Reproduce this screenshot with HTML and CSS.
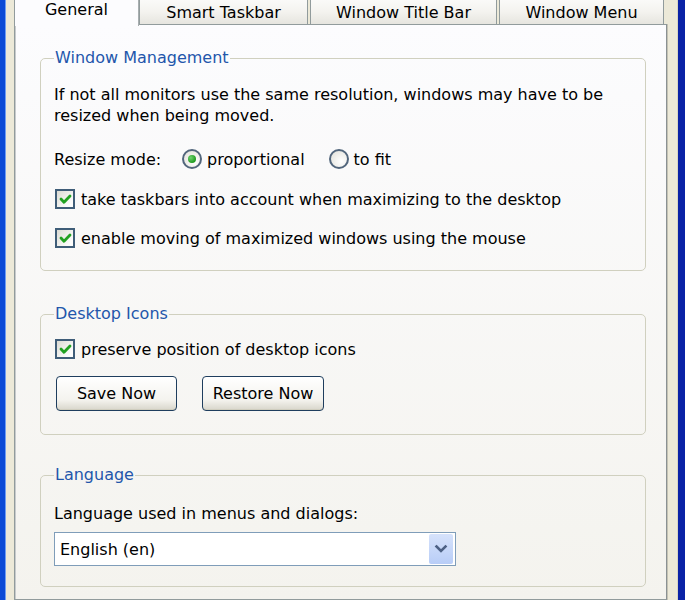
FILE: index.html
```html
<!DOCTYPE html>
<html>
<head>
<meta charset="utf-8">
<link rel="stylesheet" href="styles.css">
</head>
<body>
<div class="window">
  <div class="tabs">
    <div class="tab selected t-general">General</div>
    <div class="tab t-smart">Smart Taskbar</div>
    <div class="tab t-title">Window Title Bar</div>
    <div class="tab t-menu">Window Menu</div>
  </div>
  <div class="panel">
    <fieldset class="group g-wm">
      <legend>Window Management</legend>
      <p class="desc">If not all monitors use the same resolution, windows may have to be<br>resized when being moved.</p>
      <div class="resize">
        <span class="resize-label">Resize mode:</span>
        <label class="radio"><span class="rb checked"><span class="dot"></span></span>proportional</label>
        <label class="radio"><span class="rb"></span>to fit</label>
      </div>
      <label class="check c1"><span class="cb"><svg viewBox="0 0 15 15" width="15" height="15"><path d="M3 7 L6 10.2 L12 4" fill="none" stroke="#21a121" stroke-width="2.8" stroke-linecap="round" stroke-linejoin="round"/></svg></span>take taskbars into account when maximizing to the desktop</label>
      <label class="check c2"><span class="cb"><svg viewBox="0 0 15 15" width="15" height="15"><path d="M3 7 L6 10.2 L12 4" fill="none" stroke="#21a121" stroke-width="2.8" stroke-linecap="round" stroke-linejoin="round"/></svg></span>enable moving of maximized windows using the mouse</label>
    </fieldset>

    <fieldset class="group g-di">
      <legend>Desktop Icons</legend>
      <label class="check c3"><span class="cb"><svg viewBox="0 0 15 15" width="15" height="15"><path d="M3 7 L6 10.2 L12 4" fill="none" stroke="#21a121" stroke-width="2.8" stroke-linecap="round" stroke-linejoin="round"/></svg></span>preserve position of desktop icons</label>
      <div class="buttons">
        <button class="btn b-save">Save Now</button>
        <button class="btn b-restore">Restore Now</button>
      </div>
    </fieldset>

    <fieldset class="group g-lang">
      <legend>Language</legend>
      <p class="lang-label">Language used in menus and dialogs:</p>
      <div class="combo">
        <span class="combo-text">English (en)</span>
        <span class="combo-btn"><svg viewBox="0 0 24 30" width="24" height="30"><path d="M7.5 12.5 L12 17 L16.5 12.5" fill="none" stroke="#4d6185" stroke-width="2.6" stroke-linecap="square"/></svg></span>
      </div>
    </fieldset>
  </div>
</div>
</body>
</html>
```

FILE: styles.css
```css
html, body {
  margin: 0;
  padding: 0;
  overflow: hidden;
}

body {
  font-family: "DejaVu Sans", sans-serif;
  font-size: 16px;
  color: #000;
  background: #ece9d8;
}

.window {
  height: 600px;
  box-sizing: border-box;
  background: #ece9d8;
  border-left: 5px solid #0b4ad6;
  border-right: 7px solid #0a22a6;
  padding: 0 11px 0 9px;
  display: flex;
  flex-direction: column;
  box-shadow: inset 1px 0 0 #6f9ef2, inset -1px 0 0 #d8d5c4;
}

.tabs {
  height: 24px;
  display: flex;
  align-items: flex-end;
  flex: none;
}

.tab {
  box-sizing: border-box;
  height: 32px;
  border: 1px solid #919b9c;
  border-bottom: 0;
  border-radius: 3px 3px 0 0;
  background: linear-gradient(to bottom, #fefefe, #f4f3ef 60%, #e6e5df);
  display: flex;
  align-items: center;
  justify-content: center;
  padding-top: 8px;
  white-space: nowrap;
}

.tab.selected {
  position: relative;
  z-index: 2;
  height: 35px;
  margin-bottom: -2px;
  padding-top: 1px;
  background: #fcfcfe;
  border-right-color: #a8aeb0;
}

.t-general { width: 125px; }
.t-smart { width: 169px; }
.t-title { width: 187px; margin-left: 2px; }
.t-menu { width: 165px; margin-left: 2px; }

.panel {
  flex: 1;
  border: 1px solid #919b9c;
  border-right-color: #8a9193;
  box-shadow: inset 1px 0 0 #c8cbcc, 1px 0 0 #c4c2b4;
  background: linear-gradient(to bottom, #fcfcfe, #f4f3ee);
  padding: 0 20px 0 25px;
}

.group {
  margin: 0;
  border: 1px solid #d0d0bf;
  border-radius: 5px;
  padding: 0 10px 0 13px;
  min-width: 0;
}

.group legend {
  color: #2356ab;
  line-height: 20px;
  padding: 0 1px;
}

.g-wm {
  margin-top: 23px;
  padding-top: 16px;
  padding-bottom: 20px;
}

.g-di {
  margin-top: 33px;
  padding-top: 13px;
  padding-bottom: 23px;
}

.g-lang {
  margin-top: 30px;
  padding-top: 18px;
  padding-bottom: 20px;
}

.desc {
  margin: 0;
  line-height: 21px;
}

.resize {
  margin-top: 21px;
  height: 24px;
  display: flex;
  align-items: center;
}

.resize-label {
  width: 128px;
}

.radio {
  display: flex;
  align-items: center;
  gap: 5px;
  margin-right: 24px;
}

.rb {
  width: 20px;
  height: 20px;
  box-sizing: border-box;
  border-radius: 50%;
  border: 2px solid #52667c;
  background: radial-gradient(circle at 65% 65%, #ffffff, #e4e3dc 90%);
  display: flex;
  align-items: center;
  justify-content: center;
}

.dot {
  width: 8px;
  height: 8px;
  border-radius: 50%;
  background: radial-gradient(circle at 35% 35%, #6fd36f, #1f9a1f 70%);
}

.check {
  display: flex;
  align-items: center;
  gap: 6px;
  height: 24px;
}

.c1 { margin-top: 16px; }
.c2 { margin-top: 15px; }

.cb {
  width: 20px;
  height: 20px;
  box-sizing: border-box;
  border: 2px solid #3f5d78;
  background: linear-gradient(135deg, #dcdcd4, #fcfcfb 80%);
  display: flex;
  align-items: center;
  justify-content: center;
  margin-left: 1px;
}

.cb svg {
  width: 15px;
  height: 15px;
  flex: none;
}

.buttons {
  display: flex;
  gap: 25px;
  margin-top: 15px;
  margin-left: 2px;
}

.btn {
  font: inherit;
  color: #000;
  height: 35px;
  box-sizing: border-box;
  border: 1px solid #1f3e5e;
  border-radius: 4px;
  background: linear-gradient(to bottom, #ffffff, #f4f3ee 70%, #d8d6cb);
  box-shadow: inset 0 -1px 0 #d0cebf;
  padding: 0;
}

.b-save { width: 121px; }
.b-restore { width: 122px; }

.lang-label {
  margin: 0;
  line-height: 21px;
}

.combo {
  margin-top: 8px;
  width: 402px;
  height: 34px;
  box-sizing: border-box;
  border: 1px solid #7f9db9;
  background: #fff;
  display: flex;
  align-items: center;
  justify-content: space-between;
  padding: 1px 2px 1px 5px;
}

.combo-btn {
  width: 24px;
  height: 30px;
  border-radius: 2px;
  background: linear-gradient(to bottom, #d6e2fb, #b8cdf7);
  display: flex;
}
```
